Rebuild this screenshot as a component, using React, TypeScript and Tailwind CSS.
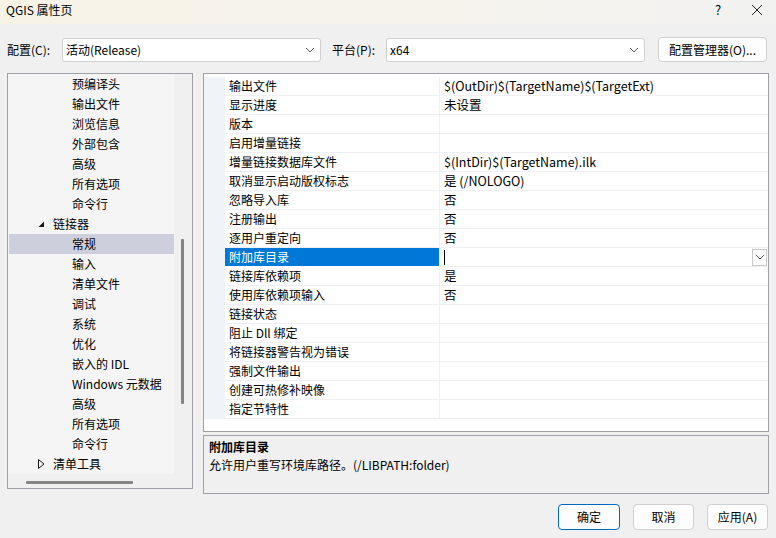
import React from "react";

const FONT = { fontFamily: '"Noto Sans CJK SC", "Noto Sans", sans-serif' };

function Chevron({ className = "" }: { className?: string }) {
  return (
    <svg width="10" height="6" viewBox="0 0 10 6" className={className}>
      <polyline points="1,1 5,5 9,1" fill="none" stroke="#606060" strokeWidth="1" />
    </svg>
  );
}

type TreeItem = { label: string; level: 1 | 2; icon?: "open" | "closed"; selected?: boolean };

const treeItems: TreeItem[] = [
  { label: "预编译头", level: 2 },
  { label: "输出文件", level: 2 },
  { label: "浏览信息", level: 2 },
  { label: "外部包含", level: 2 },
  { label: "高级", level: 2 },
  { label: "所有选项", level: 2 },
  { label: "命令行", level: 2 },
  { label: "链接器", level: 1, icon: "open" },
  { label: "常规", level: 2, selected: true },
  { label: "输入", level: 2 },
  { label: "清单文件", level: 2 },
  { label: "调试", level: 2 },
  { label: "系统", level: 2 },
  { label: "优化", level: 2 },
  { label: "嵌入的 IDL", level: 2 },
  { label: "Windows 元数据", level: 2 },
  { label: "高级", level: 2 },
  { label: "所有选项", level: 2 },
  { label: "命令行", level: 2 },
  { label: "清单工具", level: 1, icon: "closed" },
];

const props: [string, string][] = [
  ["输出文件", "$(OutDir)$(TargetName)$(TargetExt)"],
  ["显示进度", "未设置"],
  ["版本", ""],
  ["启用增量链接", ""],
  ["增量链接数据库文件", "$(IntDir)$(TargetName).ilk"],
  ["取消显示启动版权标志", "是 (/NOLOGO)"],
  ["忽略导入库", "否"],
  ["注册输出", "否"],
  ["逐用户重定向", "否"],
  ["附加库目录", "__SEL__"],
  ["链接库依赖项", "是"],
  ["使用库依赖项输入", "否"],
  ["链接状态", ""],
  ["阻止 Dll 绑定", ""],
  ["将链接器警告视为错误", ""],
  ["强制文件输出", ""],
  ["创建可热修补映像", ""],
  ["指定节特性", ""],
];

function Combo({ value, width }: { value: string; width: string }) {
  return (
    <div className={`${width} h-[24px] bg-white border border-[#d0d0d0] rounded-[3px] flex items-center pl-[3px] pr-[5px]`}>
      <span className="flex-1 text-[12px] text-black">{value}</span>
      <Chevron />
    </div>
  );
}

function Button({ label, primary, width }: { label: string; primary?: boolean; width: string }) {
  return (
    <div
      className={`${width} h-[26px] rounded-[4px] bg-[#fdfdfd] flex items-center justify-center text-[12px] text-black border ${
        primary ? "border-[#0067c0]" : "border-[#d0d0d0]"
      }`}
    >
      {label}
    </div>
  );
}

export default function App() {
  return (
    <div className="w-[776px] h-[538px] bg-[#f0f0f0] flex flex-col overflow-hidden text-black" style={FONT}>
      {/* title bar */}
      <div className="h-[24px] flex items-center pl-[6px] bg-gradient-to-r from-[#f8f3e7] via-[#f6f3ec] to-[#f2f2f1]">
        <span className="text-[12px] flex-1 -mt-[4px]">QGIS 属性页</span>
        <span className="text-[13px] w-[14px] text-center -mt-[4px] mr-[26px]">?</span>
        <svg width="12" height="12" viewBox="0 0 12 12" className="mr-[13px] -mt-[4px]">
          <path d="M1 1 L11 11 M11 1 L1 11" stroke="#222" strokeWidth="1" />
        </svg>
      </div>

      {/* config row */}
      <div className="mt-[13px] h-[25px] flex items-center pl-[7px]">
        <span className="text-[12px] w-[55px]">配置(C):</span>
        <Combo value="活动(Release)" width="w-[259px]" />
        <span className="text-[12px] ml-[11px] w-[54px]">平台(P):</span>
        <Combo value="x64" width="w-[259px]" />
        <div className="ml-[13px] w-[109px] h-[25px] rounded-[4px] bg-[#fdfdfd] border border-[#d0d0d0] flex items-center justify-center text-[12px]">
          配置管理器(O)...
        </div>
      </div>

      {/* main */}
      <div className="mt-[11px] flex pl-[7px]">
        {/* tree */}
        <div className="w-[186px] h-[416px] border border-[#a0a0a8] flex flex-col">
          <div className="flex h-[400px]">
            <div className="w-[166px] bg-[#f5f5f5] pl-[1px] flex flex-col">
              {treeItems.map((it, i) => (
                <div
                  key={i}
                  className={`h-[20px] flex items-center text-[12px] ${it.selected ? "bg-[#cdd0dc]" : ""} ${
                    it.level === 2 ? "pl-[63px]" : "pl-[29px]"
                  }`}
                >
                  {it.icon === "open" && (
                    <svg width="7" height="7" viewBox="0 0 7 7" className="mr-[8px]">
                      <polygon points="6,0.5 6,6 0.5,6" fill="#1a1a1a" />
                    </svg>
                  )}
                  {it.icon === "closed" && (
                    <svg width="7" height="10" viewBox="0 0 7 10" className="mr-[8px]">
                      <polygon points="0.5,0.5 6,5 0.5,9.5" fill="none" stroke="#1a1a1a" strokeWidth="1" />
                    </svg>
                  )}
                  <span className="whitespace-nowrap">{it.label}</span>
                </div>
              ))}
            </div>
            <div className="flex-1 bg-[#f0f0f0] pt-[165px] pl-[7px]">
              <div className="w-[3px] h-[165px] bg-[#858585] rounded-[1px]" />
            </div>
          </div>
          <div className="flex-1 bg-[#f0f0f0] pt-[7px] pl-[18px]">
            <div className="w-[107px] h-[3px] bg-[#858585] rounded-[1px]" />
          </div>
        </div>

        {/* right column */}
        <div className="ml-[10px] w-[566px] flex flex-col">
          <div className="h-[359px] border border-[#a0a0a8] bg-white pt-[3px] flex flex-col">
            {props.map(([name, value], i) => {
              const sel = value === "__SEL__";
              return (
                <div key={i} className="h-[19px] flex">
                  <div className="w-[21px] bg-[#f0f4f9]" />
                  <div
                    className={`w-[214px] h-[19px] pl-[4px] flex items-center text-[12px] border-b ${
                      sel ? "bg-[#0078d7] text-white border-[#0078d7] border-b-white" : "border-[#eef0f4]"
                    }`}
                  >
                    {name}
                  </div>
                  <div className="w-[1px] bg-[#eef0f4]" />
                  <div className="flex-1 h-[19px] pl-[4px] flex items-center text-[12.5px] border-b border-[#eef0f4]">
                    {sel ? (
                      <>
                        <div className="w-[1px] h-[15px] bg-black" />
                        <div className="flex-1" />
                        <div className="w-[15px] h-[17px] mr-[1px] border border-[#c8c8c8] bg-white flex items-center justify-center">
                          <Chevron />
                        </div>
                      </>
                    ) : (
                      value
                    )}
                  </div>
                </div>
              );
            })}
          </div>
          <div className="mt-[3px] h-[59px] border border-[#a0a0a8] bg-[#f0f0f0] pl-[5px] pt-[2px] flex flex-col">
            <span className="text-[12px] font-bold leading-[18px]">附加库目录</span>
            <span className="text-[12px] leading-[18px]">允许用户重写环境库路径。(/LIBPATH:folder)</span>
          </div>
        </div>
      </div>

      {/* buttons */}
      <div className="mt-[10px] flex justify-end pr-[8px] gap-[13px]">
        <Button label="确定" primary width="w-[62px]" />
        <Button label="取消" width="w-[61px]" />
        <Button label="应用(A)" width="w-[61px]" />
      </div>
    </div>
  );
}
